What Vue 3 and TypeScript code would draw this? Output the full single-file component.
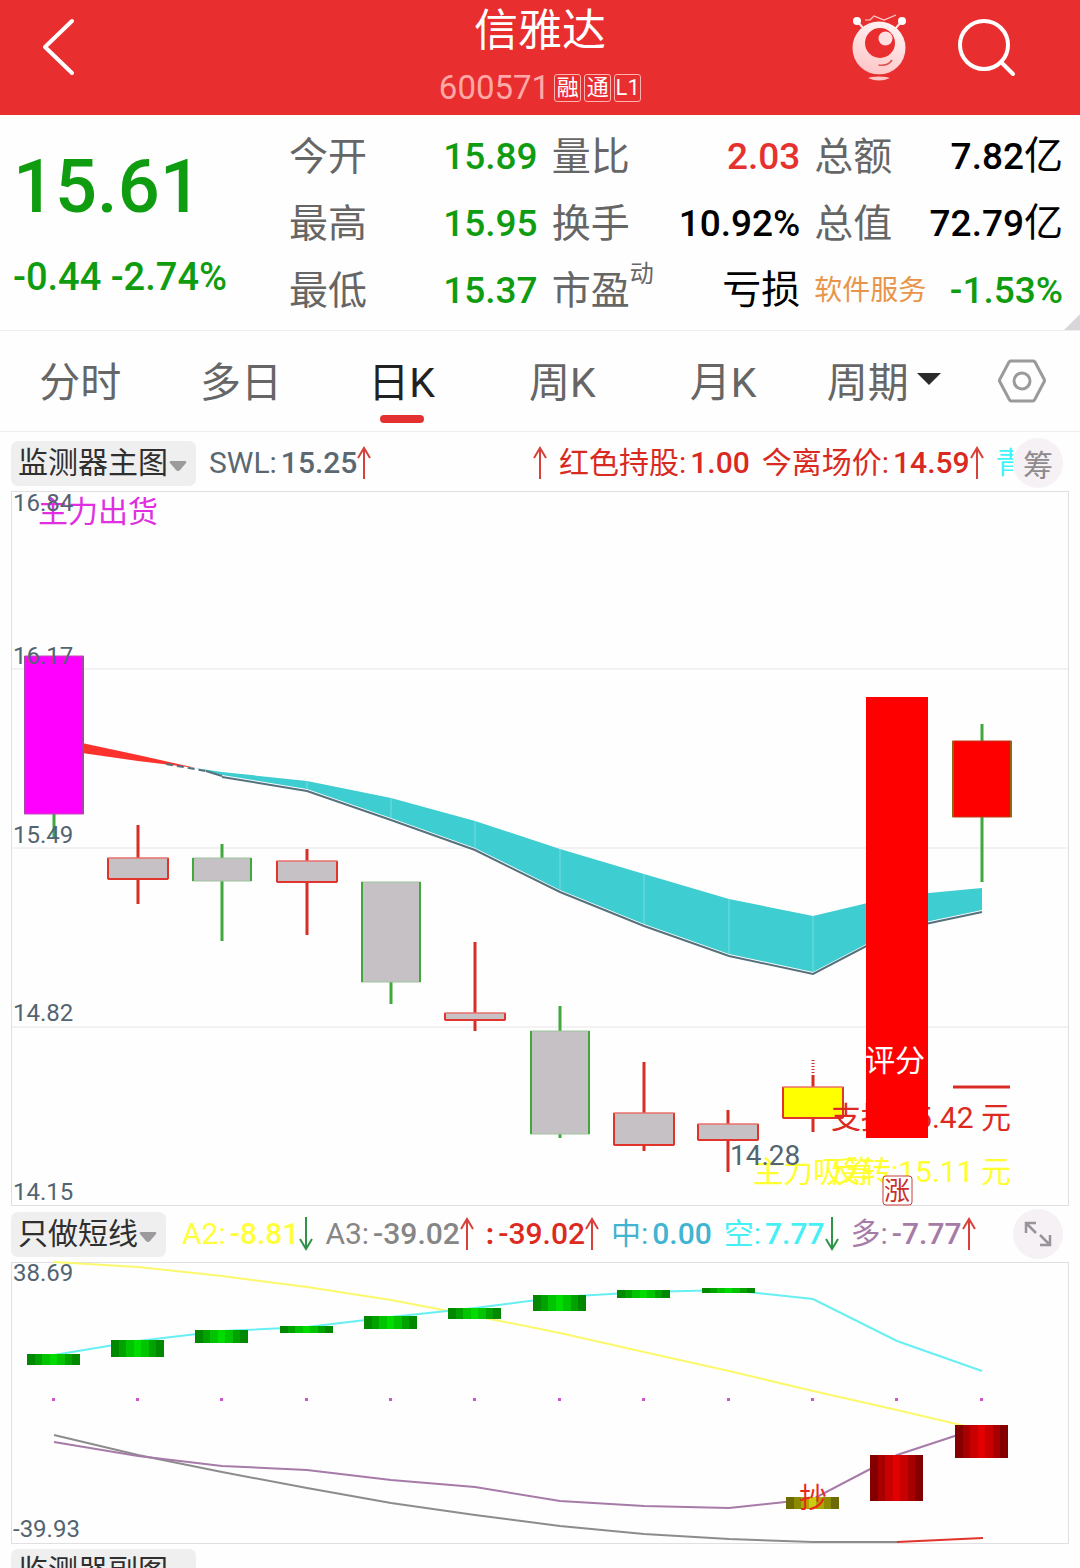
<script setup lang="ts">
import { ref } from 'vue'

type Tone = 'up' | 'down' | 'plain'
interface Cell { label: string; sup?: string; value: string; unit?: string; tone: Tone; sector?: boolean }
interface Readout { label: string; value: string; color: string; arrow?: 'up' | 'down'; lead?: boolean; bold?: boolean }
interface Candle { x: number; w: number; top: number; bottom: number; high: number; low: number; fill: string; side: string; edge: string; wick: string }
interface Bar { x: number; top: number; bottom: number; tone: string }

const badges = ['融', '通', 'L1']

const cells: Cell[] = [
  { label: '今开', value: '15.89', tone: 'down' },
  { label: '量比', value: '2.03', tone: 'up' },
  { label: '总额', value: '7.82', unit: '亿', tone: 'plain' },
  { label: '最高', value: '15.95', tone: 'down' },
  { label: '换手', value: '10.92%', tone: 'plain' },
  { label: '总值', value: '72.79', unit: '亿', tone: 'plain' },
  { label: '最低', value: '15.37', tone: 'down' },
  { label: '市盈', sup: '动', value: '', unit: '亏损', tone: 'plain' },
  { label: '软件服务', value: '-1.53%', tone: 'down', sector: true },
]

const tabs = ['分时', '多日', '日K', '周K', '月K']
const activeTab = ref('日K')

const mainReadouts: Readout[] = [
  { label: 'SWL:', value: '15.25', color: '#5a6872', arrow: 'up', lead: true },
  { label: '', value: '', color: '#d92a22', arrow: 'up' },
  { label: '红色持股:', value: '1.00', color: '#d92a22' },
  { label: '今离场价:', value: '14.59', color: '#d92a22', arrow: 'up' },
  { label: '青', value: '', color: '#3ff4fa' },
]
const subReadouts: Readout[] = [
  { label: 'A2:', value: '-8.81', color: '#ffff3c', arrow: 'down' },
  { label: 'A3:', value: '-39.02', color: '#868686', arrow: 'up' },
  { label: ':', value: '-39.02', color: '#dc2a20', arrow: 'up', bold: true },
  { label: '中:', value: '0.00', color: '#40b4d0' },
  { label: '空:', value: '7.77', color: '#45f0f5', arrow: 'down' },
  { label: '多:', value: '-7.77', color: '#a67ba6', arrow: 'up' },
]

const gray = '#c6c1c5'
const red = '#e0342c'
const green = '#41a83c'
const soft = '#ec8d8a'
const candles: Candle[] = [
  { x: 54, w: 58, top: 656, bottom: 814, high: 656, low: 838, fill: '#ff00ff', side: '#a845a8', edge: '#c050b0', wick: green },
  { x: 138, w: 60, top: 858, bottom: 879, high: 825, low: 904, fill: gray, side: red, edge: red, wick: '#d92c25' },
  { x: 222, w: 58, top: 858, bottom: 881, high: 844, low: 941, fill: gray, side: green, edge: '#9cc39b', wick: green },
  { x: 307, w: 60, top: 861, bottom: 882, high: 849, low: 935, fill: gray, side: red, edge: red, wick: '#d92c25' },
  { x: 391, w: 58, top: 882, bottom: 982, high: 882, low: 1004, fill: gray, side: green, edge: '#9cc39b', wick: green },
  { x: 475, w: 60, top: 1013, bottom: 1020, high: 942, low: 1031, fill: gray, side: red, edge: red, wick: '#d92c25' },
  { x: 560, w: 58, top: 1031, bottom: 1134, high: 1006, low: 1138, fill: gray, side: green, edge: '#9cc39b', wick: green },
  { x: 644, w: 60, top: 1113, bottom: 1145, high: 1062, low: 1151, fill: gray, side: red, edge: red, wick: '#d92c25' },
  { x: 728, w: 60, top: 1124, bottom: 1140, high: 1110, low: 1172, fill: gray, side: red, edge: red, wick: '#d92c25' },
  { x: 813, w: 60, top: 1087, bottom: 1118, high: 1075, low: 1132, fill: '#ffff00', side: red, edge: red, wick: '#d92c25' },
  { x: 982, w: 58, top: 741, bottom: 817, high: 724, low: 882, fill: '#ff0000', side: '#8a6a10', edge: '#c03818', wick: green },
]
const ribbonTop = [[195, 768], [222, 772], [307, 781], [391, 798], [475, 821], [560, 849], [644, 874], [729, 899], [813, 916], [897, 896], [982, 888]]
const ribbonBottom = [[195, 768], [222, 775], [307, 789], [391, 818], [475, 848], [560, 890], [644, 924], [729, 954], [813, 972], [897, 928], [982, 910]]
const join = (points: number[][]) => points.map((p) => p.join(',')).join(' ')
const ribbon = join([...ribbonTop, ...[...ribbonBottom].reverse()])
const ribbonLine = join(ribbonBottom.slice(1).map(([x, y]) => [x, y + 2]))
const seams = ribbonTop.slice(2, 9).map(([x, y], i) => ({ x, top: y, bottom: ribbonBottom[i + 2][1] }))

const priceGrid = [669, 848, 1027]
const priceLabels = [
  { text: '16.84', y: 511 },
  { text: '16.17', y: 664 },
  { text: '15.49', y: 843 },
  { text: '14.82', y: 1021 },
  { text: '14.15', y: 1200 },
]

const days = [54, 138, 222, 307, 391, 475, 560, 644, 729, 813, 897, 982]
const series = (ys: number[]) => join(ys.map((y, i) => [days[i], y]))
const yellowLine = series([1262, 1267, 1276, 1287, 1300, 1316, 1333, 1352, 1371, 1391, 1410, 1430])
const cyanLine = series([1355, 1341, 1331, 1327, 1317, 1308, 1297, 1292, 1290, 1299, 1341, 1371])
const grayLine = series([1435, 1455, 1472, 1488, 1503, 1515, 1526, 1534, 1539, 1542, 1542])
const purpleLine = series([1442, 1456, 1466, 1470, 1480, 1487, 1501, 1506, 1508, 1499, 1455, 1427])
const bars: Bar[] = [
  { x: 54, top: 1354, bottom: 1365, tone: 'green' },
  { x: 138, top: 1340, bottom: 1357, tone: 'green' },
  { x: 222, top: 1330, bottom: 1343, tone: 'green' },
  { x: 307, top: 1326, bottom: 1333, tone: 'green' },
  { x: 391, top: 1316, bottom: 1329, tone: 'green' },
  { x: 475, top: 1308, bottom: 1319, tone: 'green' },
  { x: 560, top: 1295, bottom: 1311, tone: 'green' },
  { x: 644, top: 1290, bottom: 1298, tone: 'green' },
  { x: 729, top: 1288, bottom: 1293, tone: 'green' },
  { x: 813, top: 1497, bottom: 1509, tone: 'olive' },
  { x: 897, top: 1455, bottom: 1501, tone: 'red' },
  { x: 982, top: 1425, bottom: 1458, tone: 'red' },
]
const shades = [
  { id: 'green', steps: ['#008800', '#00a200', '#00c400', '#00dc00'] },
  { id: 'olive', steps: ['#6c6a00', '#8c8a00', '#aaa800', '#cccc10'] },
  { id: 'red', steps: ['#840000', '#a80000', '#c80000', '#e20000'] },
]
const bands = (steps: string[]) =>
  [...steps, ...steps.slice(0, 3).reverse()].flatMap((color, i) => [
    { offset: i / 7, color },
    { offset: (i + 1) / 7, color },
  ])
</script>

<template>
  <div class="page">
    <header class="top">
      <div class="side">
        <button class="icon" type="button" aria-label="返回">
          <svg width="40" height="64" viewBox="0 0 40 64" fill="none" stroke="#fff" stroke-width="4" stroke-linecap="round" stroke-linejoin="round">
            <path d="M30 6 3 32l27 26" />
          </svg>
        </button>
      </div>
      <div class="name">
        <h1>信雅达</h1>
        <p class="code">
          <span>600571</span>
          <span class="badges"><span v-for="b in badges" :key="b" class="badge">{{ b }}</span></span>
        </p>
      </div>
      <div class="side end">
        <button class="icon" type="button" aria-label="助手">
          <svg width="64" height="70" viewBox="847 12 64 70">
            <defs>
              <linearGradient id="skin" x1="0.6" y1="0" x2="0.3" y2="1">
                <stop offset="0" stop-color="#fff4f4" />
                <stop offset="0.5" stop-color="#ffdcdd" />
                <stop offset="1" stop-color="#ffc4c6" />
              </linearGradient>
            </defs>
            <path d="m857 21 7 8M902 21l-7 8" stroke="#ffe4e4" stroke-width="2" />
            <circle cx="857" cy="21" r="4" fill="#fff" />
            <circle cx="902" cy="21" r="4" fill="#fff" />
            <path d="M865 20h5l4-4 10 4 12-5" fill="none" stroke="#ffd0d0" stroke-width="1.2" />
            <circle cx="879" cy="48" r="26.5" fill="url(#skin)" />
            <circle cx="880" cy="43" r="15" fill="#e82e2f" />
            <circle cx="885.5" cy="38.5" r="7" fill="#ffe0e0" />
            <path d="M878.500 65c6 1 11-1 13.500-5" fill="none" stroke="#e05050" stroke-width="1.6" />
            <path d="M868 78q11-4 22 0q-11 5-22 0z" fill="#ffc4c6" />
            <path d="M866 76.500q13 -2 26 0" fill="none" stroke="#e82e2f" stroke-width="2" />
          </svg>
        </button>
        <button class="icon" type="button" aria-label="搜索">
          <svg width="60" height="60" viewBox="957 17 60 60" fill="none" stroke="#fff" stroke-width="4" stroke-linecap="round">
            <circle cx="984" cy="45" r="24" />
            <path d="m1001 62 12 12" />
          </svg>
        </button>
      </div>
    </header>

    <section class="quote">
      <div class="last down">
        <strong>15.61</strong>
        <span class="change">-0.44 -2.74%</span>
      </div>
      <dl class="stats">
        <div v-for="c in cells" :key="c.label" class="stat">
          <dt :class="{ sector: c.sector }">{{ c.label }}<sup v-if="c.sup">{{ c.sup }}</sup></dt>
          <dd :class="c.tone">{{ c.value }}<span v-if="c.unit" class="unit">{{ c.unit }}</span></dd>
        </div>
      </dl>
      <span class="corner" aria-hidden="true"></span>
    </section>

    <nav class="tabs">
      <button v-for="t in tabs" :key="t" type="button" class="tab" :class="{ active: t === activeTab }" @click="activeTab = t">{{ t }}</button>
      <button type="button" class="tab" aria-haspopup="menu">
        周期<svg width="24" height="12" viewBox="0 0 24 12"><path d="M0 0h24L12 12z" fill="#2b2b2b" /></svg>
      </button>
      <button type="button" class="gear" aria-label="设置">
        <svg width="48" height="44" viewBox="0 0 48 44" fill="none" stroke="#9a9a9a" stroke-width="3" stroke-linejoin="round">
          <path d="M13 2h22q1 0 2 1l9 17q1 2 0 3l-9 17q-1 2-2 2H13q-1 0-2-2L2 23q-1-1 0-3l9-17q1-1 2-1z" />
          <circle cx="24" cy="22" r="8" />
        </svg>
      </button>
    </nav>

    <main class="panels">
      <div class="legend">
        <span class="picker">
          <select aria-label="主图指标"><option>监测器主图</option></select>
          <svg width="18" height="11" viewBox="0 0 18 11"><path d="M2 0h14q2 0 1 2l-6 7q-2 2-4 0L1 2Q0 0 2 0z" fill="#9c9a9c" /></svg>
        </span>
        <div class="readouts">
          <span v-for="r in mainReadouts" :key="r.label" class="readout" :class="{ lead: r.lead }" :style="{ color: r.color }">
            <span v-if="r.label" class="key">{{ r.label }}</span><span v-if="r.value" class="num">{{ r.value }}</span>
            <svg v-if="r.arrow" width="14" height="34" viewBox="0 0 14 34" fill="none" stroke="#d8403a" stroke-width="2"><path d="M7 33V2M1 12 7 2l6 10" /></svg>
          </span>
        </div>
        <button type="button" class="round">筹</button>
      </div>

      <svg class="chart" viewBox="0 490 1080 717" role="img" aria-label="日K线图">
        <rect x="11.500" y="491.500" width="1057" height="714" class="frame" />
        <line v-for="y in priceGrid" :key="y" x1="11" x2="1069" :y1="y" :y2="y" class="rule" />

        <polygon points="54,737 138,755 196,768 138,761 54,749" fill="#fb332c" />
        <polygon :points="ribbon" fill="#3ecdd0" />
        <line v-for="s in seams" :key="s.x" :x1="s.x" :x2="s.x" :y1="s.top" :y2="s.bottom" stroke="#74dcde" />
        <path d="m166 764 40 7" class="average" stroke-dasharray="7 4" />
        <polyline :points="ribbonLine" class="average" />
        <path d="M206 771l16 5" class="average" />

        <text x="38" y="522" class="note" fill="#e02ee0">主力出货</text>
        <g v-for="c in candles" :key="c.x">
          <line :x1="c.x" :x2="c.x" :y1="c.high" :y2="c.low" :stroke="c.wick" stroke-width="3" />
          <rect :x="c.x - c.w / 2" :y="c.top" :width="c.w" :height="c.bottom - c.top" :fill="c.fill" :stroke="c.edge" stroke-width="1" />
          <path :d="`M${c.x - c.w / 2} ${c.top}V${c.bottom}M${c.x + c.w / 2} ${c.top}V${c.bottom}`" :stroke="c.side" stroke-width="2" />
          <path v-if="c.edge === red" :d="`M${c.x - c.w / 2} ${c.bottom}h${c.w}`" :stroke="c.edge" stroke-width="2" />
          <path v-if="c.edge === red" :d="`M${c.x - c.w / 2} ${c.top}h${c.w}`" :stroke="soft" stroke-width="1" />
        </g>
        <line x1="813" x2="813" y1="1060" y2="1075" stroke="#d92c25" stroke-width="3" stroke-dasharray="1 2" />
        <line x1="953" x2="1010" y1="1087" y2="1087" stroke="#d92c25" stroke-width="3" />

        <text x="753" y="1182" class="note" fill="#ffff30">主力吸筹</text>
        <text x="1011" y="1182" class="note" text-anchor="end" fill="#ffff30">反转:15.11 元</text>
        <text x="1011" y="1128" class="note" text-anchor="end" fill="#dc2a20">支撑:15.42 元</text>
        <rect x="866" y="697" width="62" height="441" fill="#ff0000" />
        <text x="865" y="1071" class="note" fill="#fff">评分</text>
        <text x="730" y="1165" class="low" fill="#536471">14.28</text>
        <rect x="883" y="1176" width="29" height="29" rx="3" fill="#fff" stroke="#c8403c" />
        <text x="897" y="1200" class="mark" text-anchor="middle" fill="#c8302c">涨</text>
        <text v-for="l in priceLabels" :key="l.y" x="13" :y="l.y" class="axis">{{ l.text }}</text>
      </svg>

      <div class="legend low-legend">
        <span class="picker">
          <select aria-label="副图指标"><option>只做短线</option></select>
          <svg width="18" height="11" viewBox="0 0 18 11"><path d="M2 0h14q2 0 1 2l-6 7q-2 2-4 0L1 2Q0 0 2 0z" fill="#9c9a9c" /></svg>
        </span>
        <div class="readouts">
          <span v-for="r in subReadouts" :key="r.label" class="readout" :class="{ bold: r.bold }" :style="{ color: r.color }">
            <span class="key">{{ r.label }}</span><span class="num">{{ r.value }}</span>
            <svg v-if="r.arrow === 'up'" width="14" height="34" viewBox="0 0 14 34" fill="none" stroke="#d8403a" stroke-width="2"><path d="M7 33V2M1 12 7 2l6 10" /></svg>
            <svg v-if="r.arrow === 'down'" width="14" height="34" viewBox="0 0 14 34" fill="none" stroke="#2f9448" stroke-width="2"><path d="M7 0v31M1 22l6 10 6-10" /></svg>
          </span>
        </div>
        <button type="button" class="round" aria-label="放大">
          <svg width="28" height="28" viewBox="0 0 28 28" fill="none" stroke="#98949a" stroke-width="2.500">
            <path d="M2 13V3h10M3 4l9 9M26 15v10H16M25 24l-9-9" />
          </svg>
        </button>
      </div>

      <svg class="chart" viewBox="0 1261 1080 283" role="img" aria-label="只做短线">
        <defs>
          <linearGradient v-for="s in shades" :id="s.id" :key="s.id">
            <stop v-for="(b, i) in bands(s.steps)" :key="i" :offset="b.offset" :stop-color="b.color" />
          </linearGradient>
        </defs>
        <rect x="11.500" y="1262.500" width="1057" height="281" class="frame" />
        <g fill="none" stroke-width="2">
          <polyline :points="yellowLine" stroke="#fcf86c" />
          <polyline :points="cyanLine" stroke="#68eff3" />
          <polyline :points="grayLine" stroke="#8c8c8c" />
          <path d="m897 1542 86-4" stroke="#e0342c" />
          <polyline :points="purpleLine" stroke="#a67ba8" />
        </g>
        <rect v-for="d in days" :key="d" :x="d - 2" y="1398" width="3" height="3" fill="#cc55cc" />
        <rect v-for="b in bars" :key="b.x" :x="b.x - 27" :y="b.top" width="53" :height="b.bottom - b.top" :fill="`url(#${b.tone})`" />
        <text x="813" y="1508" class="low" text-anchor="middle" fill="#e8281c">抄</text>
        <text x="13" y="1281" class="axis">38.69</text>
        <text x="13" y="1537" class="axis">-39.93</text>
      </svg>

      <div class="legend low-legend">
        <span class="picker">
          <select aria-label="第二副图指标"><option>监测器副图</option></select>
          <svg width="18" height="11" viewBox="0 0 18 11"><path d="M2 0h14q2 0 1 2l-6 7q-2 2-4 0L1 2Q0 0 2 0z" fill="#9c9a9c" /></svg>
        </span>
      </div>
    </main>
  </div>
</template>

<style>
body {
  margin: 0;
  background: #fefefe;
}
</style>

<style scoped>
.page {
  display: flex;
  flex-direction: column;
  height: 100vh;
  overflow: hidden;
  font-family: Roboto, "Noto Sans CJK SC", sans-serif;
  color: #333;
}
button {
  padding: 0;
  border: 0;
  background: none;
  font: inherit;
  color: inherit;
}
svg {
  display: block;
}
.top {
  display: grid;
  grid-template-columns: 1fr auto 1fr;
  flex: none;
  height: 115px;
  background: #e82e2f;
}
.side {
  display: flex;
  align-items: flex-start;
  padding: 15px 42px;
}
.end {
  justify-content: flex-end;
  gap: 46px;
  padding: 12px 63px;
}
.end .icon + .icon {
  padding-top: 5px;
}
.name {
  display: flex;
  flex-direction: column;
  align-items: center;
}
h1 {
  margin: 0;
  font-size: 44px;
  font-weight: 400;
  line-height: 62px;
  color: #fff;
}
.code {
  display: flex;
  align-items: center;
  gap: 4px;
  margin: 0;
  font-size: 33px;
  line-height: 52px;
  font-weight: 400;
  color: #ffa8a6;
}
.badges {
  display: flex;
  gap: 3px;
}
.badge {
  box-sizing: border-box;
  width: 27px;
  height: 28px;
  border: 1px solid #ffb4b2;
  border-radius: 3px;
  font-size: 22px;
  line-height: 26px;
  text-align: center;
  color: #fff;
}
.quote {
  position: relative;
  display: flex;
  flex: none;
  height: 215px;
  border-bottom: 1px solid #eee;
}
.last {
  display: flex;
  flex-direction: column;
  box-sizing: border-box;
  width: 276px;
  padding-left: 13px;
  font-weight: 500;
}
.last strong {
  margin-top: 26px;
  font-size: 74px;
  line-height: 92px;
  font-weight: 500;
}
.change {
  font-size: 38px;
  line-height: 88px;
  white-space: nowrap;
}
.stats {
  display: grid;
  flex: 1;
  grid-template-columns: repeat(3, 1fr);
  column-gap: 14px;
  align-content: start;
  margin: 0;
  padding: 8px 17px 0 13px;
}
.stat {
  display: flex;
  align-items: center;
  justify-content: space-between;
  height: 67px;
  white-space: nowrap;
}
dt {
  display: flex;
  font-size: 39px;
  line-height: 66px;
  color: #666;
}
sup {
  font-size: 24px;
  line-height: 32px;
}
dt.sector {
  font-size: 28px;
  color: #e8954a;
}
dd {
  margin: 0;
  font-size: 37px;
  line-height: 66px;
  font-weight: 500;
  color: #000;
}
.unit {
  font-size: 39px;
  font-weight: 400;
}
dd.up {
  color: #e6322e;
}
.down,
dd.down {
  color: #109c10;
}
.corner {
  position: absolute;
  right: 0;
  bottom: 0;
  border: 8px solid transparent;
  border-right-color: #d8d6da;
  border-bottom-color: #d8d6da;
}
.tabs {
  display: flex;
  flex: none;
  height: 100px;
  border-bottom: 1px solid #eee;
}
.tab {
  position: relative;
  display: flex;
  flex: 1;
  align-items: center;
  justify-content: center;
  gap: 8px;
  padding-bottom: 4px;
  font-size: 41px;
  color: #666;
}
.tab.active {
  color: #222;
}
.tab.active::after {
  content: "";
  position: absolute;
  bottom: 8px;
  width: 44px;
  height: 8px;
  border-radius: 4px;
  background: #e33131;
}
.gear {
  display: flex;
  align-items: center;
  justify-content: center;
  width: 116px;
}
.panels {
  flex: 1;
  min-height: 0;
  overflow: hidden;
}
.legend {
  display: flex;
  align-items: center;
  height: 58px;
  padding: 4px 17px 0 11px;
  box-sizing: border-box;
}
.low-legend {
  height: 54px;
  padding-top: 0;
}
.picker {
  position: relative;
  flex: none;
}
.picker svg {
  position: absolute;
  right: 9px;
  bottom: 14px;
}
select {
  appearance: none;
  display: block;
  height: 45px;
  margin: 0;
  padding: 0 28px 2px 7px;
  border: 0;
  border-radius: 7px;
  background: #efefef;
  font: 30px Roboto, "Noto Sans CJK SC", sans-serif;
  color: #2f2f2f;
}
.readouts {
  display: flex;
  flex: 1;
  gap: 12px;
  min-width: 0;
  padding-left: 13px;
  overflow: hidden;
  white-space: nowrap;
  font-size: 30px;
  line-height: 44px;
}
.low-legend .readouts {
  padding-left: 16px;
}
.readout {
  display: flex;
  flex: none;
  align-items: center;
}
.lead {
  width: 312px;
}
.num {
  margin-left: 4px;
  font-weight: 500;
}
.bold {
  font-weight: 700;
}
.round {
  display: flex;
  flex: none;
  align-items: center;
  justify-content: center;
  width: 50px;
  height: 50px;
  border-radius: 25px;
  background: #f5f1f5;
  font-size: 30px;
  color: #8e8a8e;
}
.chart {
  width: 100%;
  height: auto;
}
.frame {
  fill: none;
  stroke: #e0e0e2;
  stroke-width: 1;
}
.rule {
  stroke: #e6e6e8;
  stroke-width: 1;
}
.average {
  fill: none;
  stroke: #56707c;
  stroke-width: 2;
}
.note {
  font-size: 30px;
}
.low {
  font-size: 28px;
}
.mark {
  font-size: 26px;
}
.axis {
  font-size: 24px;
  fill: #536471;
}
</style>
